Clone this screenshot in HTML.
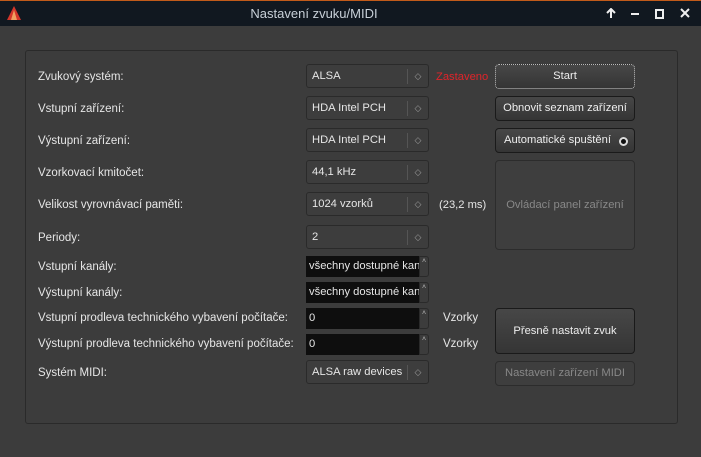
<!DOCTYPE html><html><head><style>
body{margin:0;width:701px;height:457px;background:#3c3c3c;font-family:"Liberation Sans",sans-serif;font-size:11.5px;color:#e6e6e6;position:relative;overflow:hidden}
.a{position:absolute}
.t{position:absolute;line-height:14px}
.combo{position:absolute;left:306px;width:123px;height:24px;border:1px solid #2a2a2a;border-radius:3px;background:#3d3d3d;box-sizing:border-box;}
.combo span{position:absolute;left:5px;top:5px;font-size:11.2px}
.combo i{position:absolute;right:0;top:4px;width:20px;height:15px;border-left:1px solid #555;font-style:normal;color:#999;font-size:9px;text-align:center;line-height:15px}
.btn{position:absolute;left:495px;width:140px;box-sizing:border-box;border:1px solid #1a1a1a;border-radius:4px;background:linear-gradient(#474747,#353535);text-align:center;color:#eee;font-size:11.2px}
.spin{position:absolute;left:306px;width:123px;height:21px;box-sizing:border-box}
.spin .f{position:absolute;left:0;top:0;width:113px;height:21px;background:#0e0e0e;padding:4px 3px;box-sizing:border-box;white-space:nowrap;overflow:hidden;font-size:11.2px}
.spin .b{position:absolute;right:0;top:0;width:10px;height:21px;border:1px solid #2a2a2a;border-radius:0 3px 3px 0;box-sizing:border-box;font-size:7px;color:#bbb;text-align:center;line-height:9px}
</style></head><body>
<div class="a" style="left:0;top:0;width:701px;height:1px;background:#c25b1a"></div>
<div class="a" style="left:0;top:1px;width:701px;height:25px;background:#111820"></div>
<svg class="a" style="left:7px;top:6px" width="14" height="14"><polygon points="7,0 14,14 0,14" fill="#d2352a"/><polygon points="7,4 10,14 4,14" fill="#f0a060"/></svg>
<div class="t" style="left:0;width:628px;top:7px;text-align:center;font-size:13px;color:#c8d0d8">Nastavení zvuku/MIDI</div>
<svg class="a" style="left:606px;top:8px" width="10" height="11"><path d="M5 10V1M1 5L5 1L9 5" stroke="#eee" stroke-width="2" fill="none"/></svg>
<div class="a" style="left:631px;top:13px;width:8px;height:2px;background:#eee"></div>
<div class="a" style="left:655px;top:9px;width:5px;height:6px;border:2px solid #eee"></div>
<svg class="a" style="left:680px;top:8px" width="10" height="10"><path d="M1 1L9 9M9 1L1 9" stroke="#eee" stroke-width="2"/></svg>
<div class="a" style="left:25px;top:50px;width:651px;height:372px;border:1px solid #2a2a2a;border-radius:3px"></div>

<div class="t" style="left:38px;top:70px">Zvukový systém:</div>
<div class="t" style="left:38px;top:102px">Vstupní zařízení:</div>
<div class="t" style="left:38px;top:134px">Výstupní zařízení:</div>
<div class="t" style="left:38px;top:166px">Vzorkovací kmitočet:</div>
<div class="t" style="left:38px;top:198px">Velikost vyrovnávací paměti:</div>
<div class="t" style="left:38px;top:231px">Periody:</div>
<div class="t" style="left:38px;top:260px">Vstupní kanály:</div>
<div class="t" style="left:38px;top:286px">Výstupní kanály:</div>
<div class="t" style="left:38px;top:311px">Vstupní prodleva technického vybavení počítače:</div>
<div class="t" style="left:38px;top:337px">Výstupní prodleva technického vybavení počítače:</div>
<div class="t" style="left:38px;top:366px">Systém MIDI:</div>

<div class="combo" style="top:64px"><span>ALSA</span><i>◇</i></div>
<div class="combo" style="top:96px"><span>HDA Intel PCH</span><i>◇</i></div>
<div class="combo" style="top:128px"><span>HDA Intel PCH</span><i>◇</i></div>
<div class="combo" style="top:160px"><span>44,1 kHz</span><i>◇</i></div>
<div class="combo" style="top:192px"><span>1024 vzorků</span><i>◇</i></div>
<div class="combo" style="top:225px"><span>2</span><i>◇</i></div>
<div class="combo" style="top:360px"><span>ALSA raw devices</span><i>◇</i></div>

<div class="spin" style="top:256px"><div class="f">všechny dostupné kanály</div><div class="b">˄</div></div>
<div class="spin" style="top:282px"><div class="f">všechny dostupné kanály</div><div class="b">˄</div></div>
<div class="spin" style="top:308px"><div class="f">0</div><div class="b">˄</div></div>
<div class="spin" style="top:334px"><div class="f">0</div><div class="b">˄</div></div>

<div class="t" style="left:436px;top:70px;color:#e0242a;font-size:11.2px">Zastaveno</div>
<div class="t" style="left:439px;top:198px;font-size:11.2px">(23,2 ms)</div>
<div class="t" style="left:443px;top:311px">Vzorky</div>
<div class="t" style="left:443px;top:337px">Vzorky</div>

<div class="btn" style="top:64px;height:25px;line-height:23px;border-color:#bbb;border-style:dotted">Start</div>
<div class="btn" style="top:96px;height:25px;line-height:23px">Obnovit seznam zařízení</div>
<div class="btn" style="top:128px;height:25px;line-height:23px;text-align:left;padding-left:8px">Automatické spuštění<span class="a" style="right:6px;top:8px;width:5px;height:5px;border:2px solid #ddd;border-radius:50%;background:#111"></span></div>
<div class="btn" style="top:160px;height:90px;line-height:88px;background:#3e3e3e;border-color:#2c2c2c;color:#888">Ovládací panel zařízení</div>
<div class="btn" style="top:308px;height:46px;line-height:44px">Přesně nastavit zvuk</div>
<div class="btn" style="top:361px;height:25px;line-height:23px;background:#3e3e3e;border-color:#2c2c2c;color:#888">Nastavení zařízení MIDI</div>
</body></html>
